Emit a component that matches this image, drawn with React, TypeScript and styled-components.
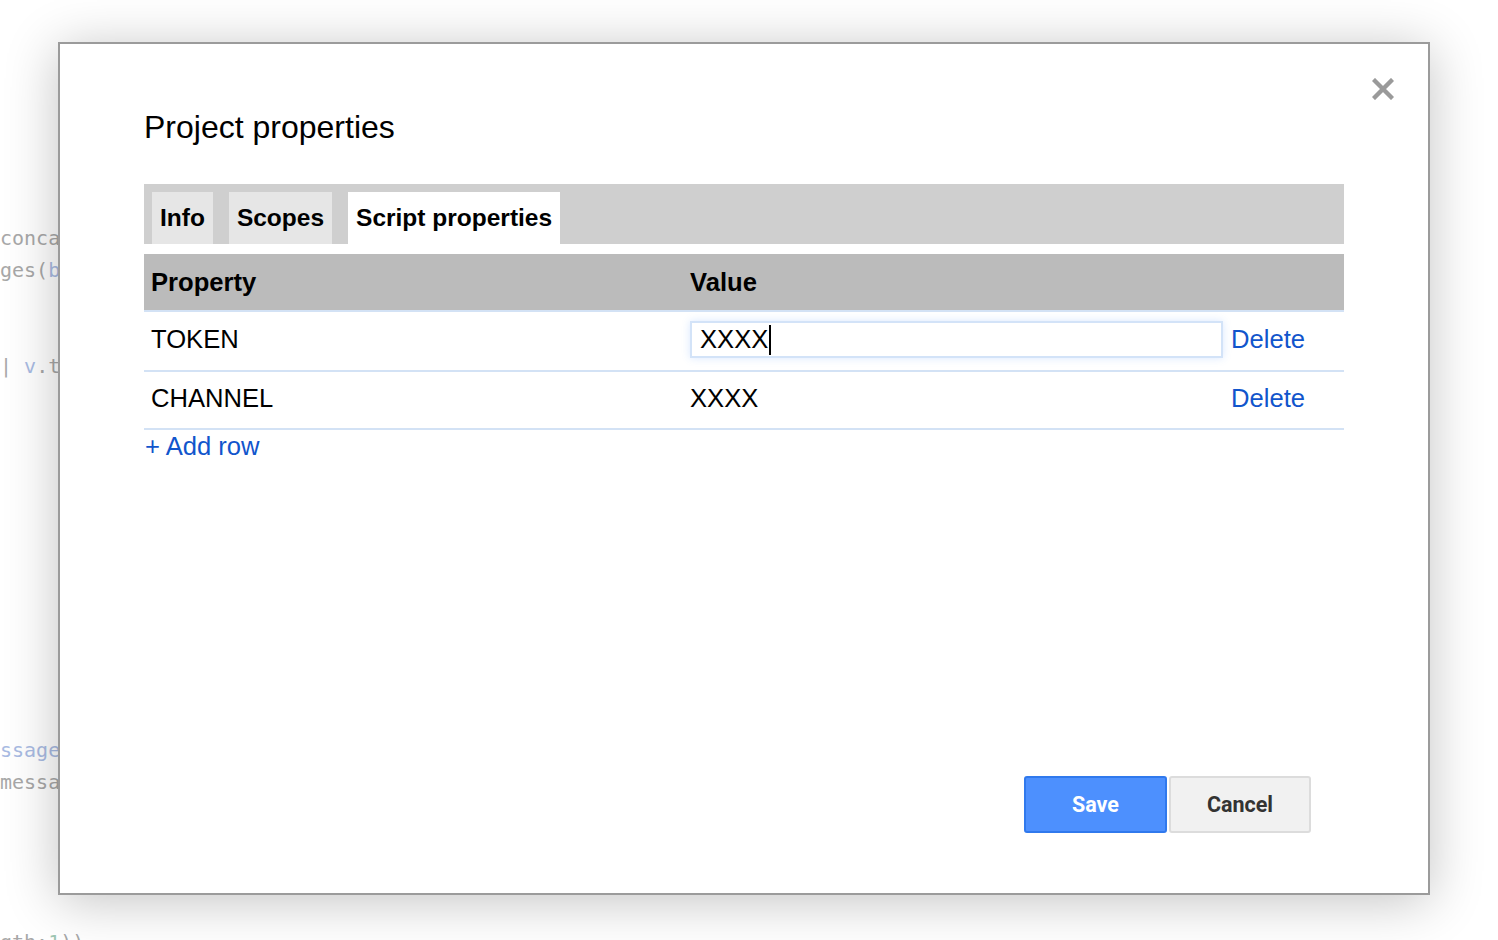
import React from "react";
import styled, { createGlobalStyle } from "styled-components";

const GlobalStyle = createGlobalStyle`
  html, body {
    margin: 0;
    padding: 0;
    background: #ffffff;
    overflow: hidden;
  }
  * { box-sizing: border-box; }
`;

const Page = styled.div`
  position: relative;
  width: 1498px;
  height: 940px;
  overflow: hidden;
  background: #ffffff;
`;

const CodeLayer = styled.div`
  padding-top: 222px;
  font-family: "DejaVu Sans Mono", "Liberation Mono", monospace;
  font-size: 20px;
  color: #a6a6a6;
`;

const CodeLine = styled.div`
  height: 32px;
  line-height: 32px;
  white-space: pre;
`;

const Tok = styled.span<{ $kind?: "plain" | "ident" | "num" }>`
  color: ${(p) =>
    p.$kind === "ident" ? "#a9bbe3" : p.$kind === "num" ? "#9fc7b4" : "#a8a8a8"};
`;

const Dialog = styled.div`
  position: absolute;
  left: 58px;
  top: 42px;
  width: 1372px;
  height: 853px;
  background: #ffffff;
  border: 2px solid #9b9b9b;
  box-shadow: 0 6px 50px rgba(0, 0, 0, 0.24);
  padding: 65px 84px 60px;
  display: flex;
  flex-direction: column;
`;

const CloseButton = styled.button`
  position: absolute;
  top: 34px;
  right: 34px;
  width: 22px;
  height: 22px;
  padding: 0;
  border: none;
  background: transparent;
  display: flex;
  align-items: center;
  justify-content: center;
  cursor: pointer;
  filter: blur(0.7px);
`;

const Title = styled.h1`
  margin: 0;
  font-family: "Liberation Sans", Arial, sans-serif;
  font-weight: 400;
  font-size: 32px;
  line-height: 36px;
  color: #000;
`;

const TabBar = styled.div`
  margin-top: 39px;
  height: 60px;
  background: #cfcfcf;
  padding: 8px 8px 0;
  display: flex;
  gap: 16px;
`;

const Tab = styled.div<{ $active?: boolean }>`
  height: 52px;
  padding: 0 8px;
  display: flex;
  align-items: center;
  background: ${(p) => (p.$active ? "#ffffff" : "#e6e6e6")};
  font-family: "Liberation Sans", Arial, sans-serif;
  font-weight: 700;
  font-size: 24.5px;
  color: #000;
`;

const Table = styled.div`
  margin-top: 10px;
  display: flex;
  flex-direction: column;
`;

const HeaderRow = styled.div`
  display: grid;
  grid-template-columns: 539px 541px 120px;
  height: 58px;
  background: #bbbbbb;
  border-bottom: 2px solid #d3e2f5;
  align-items: center;
  font-family: "Liberation Sans", Arial, sans-serif;
  font-weight: 700;
  font-size: 25.6px;
  color: #000;
`;

const HeaderCell = styled.div`
  padding-left: 7px;
`;

const Row = styled.div<{ $height: number }>`
  display: grid;
  grid-template-columns: 539px 541px 120px;
  height: ${(p) => p.$height}px;
  padding-bottom: 3px;
  border-bottom: 2px solid #d3e2f5;
  align-items: center;
  font-family: "Liberation Sans", Arial, sans-serif;
  font-size: 25.6px;
  color: #000;
`;

const Cell = styled.div`
  padding-left: 7px;
  white-space: nowrap;
`;

const InputBox = styled.div`
  width: 533px;
  height: 37px;
  border: 2px solid #d3e3f8;
  box-shadow: 0 0 8px rgba(77, 144, 254, 0.22);
  padding-left: 8px;
  display: flex;
  align-items: center;
  font-family: "Liberation Sans", Arial, sans-serif;
  font-size: 25.6px;
  color: #000;
`;

const Caret = styled.span`
  display: inline-block;
  width: 2px;
  height: 30px;
  background: #000;
  margin-left: 1px;
`;

const LinkText = styled.a`
  font-family: "Liberation Sans", Arial, sans-serif;
  font-size: 25.6px;
  color: #1155cc;
  text-decoration: none;
  cursor: pointer;
`;

const AddRow = styled(LinkText)`
  display: block;
  line-height: 32px;
  padding-left: 1px;
`;

const Spacer = styled.div`
  flex: 1;
`;

const Footer = styled.div`
  display: flex;
  justify-content: flex-end;
  gap: 2px;
  padding-right: 33px;
`;

const Button = styled.button<{ $primary?: boolean }>`
  width: ${(p) => (p.$primary ? 143 : 142)}px;
  height: 57px;
  border-radius: 3px;
  border: 2px solid ${(p) => (p.$primary ? "#3079ed" : "#dcdcdc")};
  background: ${(p) => (p.$primary ? "#4d90fe" : "#f1f1f1")};
  color: ${(p) => (p.$primary ? "#ffffff" : "#333333")};
  font-family: Roboto, "Liberation Sans", sans-serif;
  font-weight: 700;
  font-size: 21.5px;
  cursor: pointer;
`;

type Seg = { t: string; k?: "plain" | "ident" | "num" };

const codeLines: Seg[][] = (() => {
  const lines: Seg[][] = Array.from({ length: 24 }, () => []);
  lines[0] = [{ t: "concat(messages, blocks)" }];
  lines[1] = [{ t: "ges(" }, { t: "blocks", k: "ident" }, { t: ")" }];
  lines[4] = [{ t: "| " }, { t: "v", k: "ident" }, { t: ".text)" }];
  lines[16] = [{ t: "ssage", k: "ident" }, { t: ".text" }];
  lines[17] = [{ t: "message.text" }];
  lines[22] = [{ t: "gth:" }, { t: "1", k: "num" }, { t: "))" }];
  return lines;
})();

export default function App() {
  return (
    <Page>
      <GlobalStyle />
      <CodeLayer>
        {codeLines.map((segs, i) => (
          <CodeLine key={i}>
            {segs.map((s, j) => (
              <Tok key={j} $kind={s.k}>
                {s.t}
              </Tok>
            ))}
          </CodeLine>
        ))}
      </CodeLayer>

      <Dialog>
        <CloseButton aria-label="Close">
          <svg width="22" height="22" viewBox="0 0 22 22">
            <path d="M3 3 L19 19 M19 3 L3 19" stroke="#9a9a9a" strokeWidth="4.4" strokeLinecap="square" />
          </svg>
        </CloseButton>
        <Title>Project properties</Title>
        <TabBar>
          <Tab>Info</Tab>
          <Tab>Scopes</Tab>
          <Tab $active>Script properties</Tab>
        </TabBar>
        <Table>
          <HeaderRow>
            <HeaderCell>Property</HeaderCell>
            <HeaderCell>Value</HeaderCell>
            <HeaderCell />
          </HeaderRow>
          <Row $height={60}>
            <Cell>TOKEN</Cell>
            <Cell>
              <InputBox>
                XXXX
                <Caret />
              </InputBox>
            </Cell>
            <Cell>
              <LinkText>Delete</LinkText>
            </Cell>
          </Row>
          <Row $height={58}>
            <Cell>CHANNEL</Cell>
            <Cell>XXXX</Cell>
            <Cell>
              <LinkText>Delete</LinkText>
            </Cell>
          </Row>
        </Table>
        <AddRow>+ Add row</AddRow>
        <Spacer />
        <Footer>
          <Button $primary>Save</Button>
          <Button>Cancel</Button>
        </Footer>
      </Dialog>
    </Page>
  );
}
